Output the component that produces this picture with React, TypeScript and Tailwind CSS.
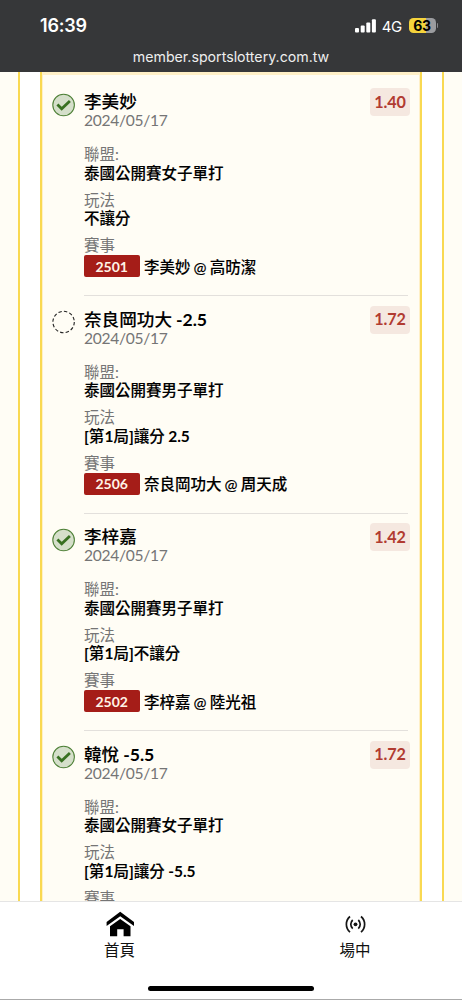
type Bet = {
  id: number;
  won: boolean;
  pick: string;
  odds: string;
  league: string;
  play: string;
  code?: string;
  match?: string;
};

const bets: Bet[] = [
  { id: 1, won: true, pick: "李美妙", odds: "1.40", league: "泰國公開賽女子單打", play: "不讓分", code: "2501", match: "李美妙 @ 高昉潔" },
  { id: 2, won: false, pick: "奈良岡功大 -2.5", odds: "1.72", league: "泰國公開賽男子單打", play: "[第1局]讓分 2.5", code: "2506", match: "奈良岡功大 @ 周天成" },
  { id: 3, won: true, pick: "李梓嘉", odds: "1.42", league: "泰國公開賽男子單打", play: "[第1局]不讓分", code: "2502", match: "李梓嘉 @ 陸光祖" },
  { id: 4, won: true, pick: "韓悅 -5.5", odds: "1.72", league: "泰國公開賽女子單打", play: "[第1局]讓分 -5.5" },
];

function StatusIcon({ won }: { won: boolean }) {
  return (
    <svg className="-mt-[0.5px] block h-6 w-6" viewBox="0 0 24 24" fill="none">
      {won ? (
        <>
          <circle cx="11.6" cy="12" r="10.8" fill="#d5dfca" stroke="#4f8138" strokeWidth="1.1" />
          <path d="M5.4 11.6l4.3 4.2 8.2-7.7" stroke="#387021" strokeWidth="2.8" />
        </>
      ) : (
        <circle cx="11.6" cy="12" r="10.7" stroke="#222" strokeWidth="1.1" strokeDasharray="3.4 2.2" />
      )}
    </svg>
  );
}

/* Digits and brackets are set heavier than the Chinese text around them. */
function Mixed({ text }: { text: string }) {
  return (
    <>
      {text.split(/([-\d.[\]]+)/).map((part, i) =>
        i % 2 === 1 ? (
          <span key={i} className="font-bold [-webkit-text-stroke:0px]">
            {part}
          </span>
        ) : (
          part
        ),
      )}
    </>
  );
}

function Field({ label, value }: { label: string; value: string }) {
  return (
    <div className="mb-[7.5px] h-[38px]">
      <div className="h-[18.5px] text-[#757575] leading-[18.5px]">{label}</div>
      <div className="h-[19.5px] font-medium leading-[19.5px] text-black [-webkit-text-stroke:0.12px_black] [word-spacing:-0.5px]">
        <Mixed text={value} />
      </div>
    </div>
  );
}

function BetRow({ bet }: { bet: Bet }) {
  return (
    <article className="flex h-[217.5px] shrink-0 pl-[9px] pr-[11px]">
      <div className="w-8 shrink-0">
        <StatusIcon won={bet.won} />
      </div>
      <div className="min-w-0 flex-1 whitespace-nowrap text-[15.5px]">
        <div className="flex h-[52px] justify-between">
          <div className="-mt-px">
            <div className="h-[19px] text-[17.6px] font-medium leading-[19px] text-black [-webkit-text-stroke:0.1px_black] [word-spacing:-0.5px]">
              <Mixed text={bet.pick} />
            </div>
            <div className="h-[18px] text-[15.6px] leading-[18px] tracking-[-0.3px] text-[#757575]">2024/05/17</div>
          </div>
          <div className="-mr-[2px] -mt-[5px] flex h-7 w-10 items-center justify-center rounded-[4px] bg-[#f5e8e0] text-[16.2px] font-bold tracking-[-0.1px] text-[#b13b31]">
            {bet.odds}
          </div>
        </div>
        <Field label="聯盟:" value={bet.league} />
        <Field label="玩法" value={bet.play} />
        <div className="h-[18.5px] leading-[18.5px] text-[#757575]">賽事</div>
        {bet.code && (
          <>
            <div className="mt-[0.5px] flex h-[22.5px] items-center">
              <span className="mr-[4.5px] flex h-[22px] w-[55.5px] items-center justify-center rounded-[2px] bg-[#a51d18] text-[14px] font-bold text-[#fff3e7]">
                {bet.code}
              </span>
              <span className="mt-[2px] font-medium text-black [-webkit-text-stroke:0.1px_black] [word-spacing:-0.8px]">{bet.match}</span>
            </div>
            <div className="mt-[17.5px] h-px bg-[#e3e0dc]" />
          </>
        )}
      </div>
    </article>
  );
}

function StatusBar() {
  return (
    <header className="h-[72px] shrink-0 bg-[#363739] font-['Inter','Liberation_Sans',sans-serif] text-white">
      <div className="flex h-[51px] items-center pl-[40px] pr-[24px]">
        <span className="text-[18px] font-semibold leading-none tracking-[-0.2px]">16:39</span>
        <svg className="ml-auto mr-[6px] h-[14px] w-[21px]" viewBox="0 0 21 14" fill="white">
          <rect x="0" y="9" width="4" height="4.6" rx="1" />
          <rect x="5.7" y="6.5" width="4" height="7.1" rx="1" />
          <rect x="11.3" y="3.6" width="4" height="10" rx="1" />
          <rect x="16.9" y="0.3" width="4" height="13.3" rx="1" />
        </svg>
        <span className="mr-[6.5px] pt-px text-[15px] leading-none tracking-[-0.3px]">4G</span>
        <div className="flex h-[15px] w-[27px] items-center justify-center rounded-[4.5px] bg-[linear-gradient(90deg,#f5d33c_63%,#9b9c9f_63%)] text-[14px] font-bold leading-none tracking-[-0.3px] text-black">
          63
        </div>
        <div className="ml-px h-[5px] w-[1.5px] rounded-r bg-[#88898c]" />
      </div>
      <div className="h-[21px] text-center text-[14.2px] leading-[12px] text-[#eee]">member.sportslottery.com.tw</div>
    </header>
  );
}

export default function App() {
  return (
    <div className="flex h-[1000px] w-[462px] flex-col overflow-hidden bg-white font-['Lato','Noto_Sans_CJK_TC',sans-serif]">
      <StatusBar />
      <main className="flex h-[829px] shrink-0 overflow-hidden">
        <div className="w-5 shrink-0 border-r-2 border-[#f9d952] bg-[#fffdf5]" />
        <div className="w-5 shrink-0" />
        <section className="flex w-[382px] shrink-0 flex-col border-x-2 border-[#f9d952] bg-[#fffdf5]">
          <div className="flex flex-col border-x border-t-[3px] border-[#fff0c7] pt-[18px]">
            {bets.map((bet) => (
              <BetRow key={bet.id} bet={bet} />
            ))}
          </div>
        </section>
        <div className="w-5 shrink-0" />
        <div className="w-5 shrink-0 border-l-2 border-[#f9d952] bg-[#fffdf5]" />
      </main>
      <footer className="flex h-[99px] shrink-0 flex-col border-b border-t border-b-[#aaa] border-t-[#e5e5e5] bg-white">
        <nav className="grid h-[84px] grid-cols-[239px_1fr] text-[15.5px] text-[#111]">
          <div className="flex flex-col items-center pt-[9px]">
            <svg className="h-[26px] w-7" viewBox="0 0 28 26" fill="black">
              <path d="M14.2.7L28 11v4.1L14.2 5.2.6 15.1V11z" />
              <path d="M14.2 7.9l10.3 7.3v10H17.6v-6.9h-6.4v6.9H4v-10z" />
            </svg>
            <span className="mt-[2.5px] leading-[20px]">首頁</span>
          </div>
          <div className="flex flex-col items-center pl-[9px] pt-[13px]">
            <svg className="h-[18px] w-[22px]" viewBox="0 0 22 18" fill="none" stroke="#161616" strokeWidth="1.7">
              <circle cx="11.5" cy="9.3" r="1.9" fill="#161616" stroke="none" />
              <path d="M8.7 5a5.8 5.8 0 000 8.6M14.3 5a5.8 5.8 0 010 8.6M6 1.5a10.2 10.2 0 000 15.6M17 1.5a10.2 10.2 0 010 15.6" />
            </svg>
            <span className="mt-[6.5px] leading-[20px]">場中</span>
          </div>
        </nav>
        <div className="mx-auto h-[5px] w-[166px] rounded-full bg-black" />
      </footer>
    </div>
  );
}
